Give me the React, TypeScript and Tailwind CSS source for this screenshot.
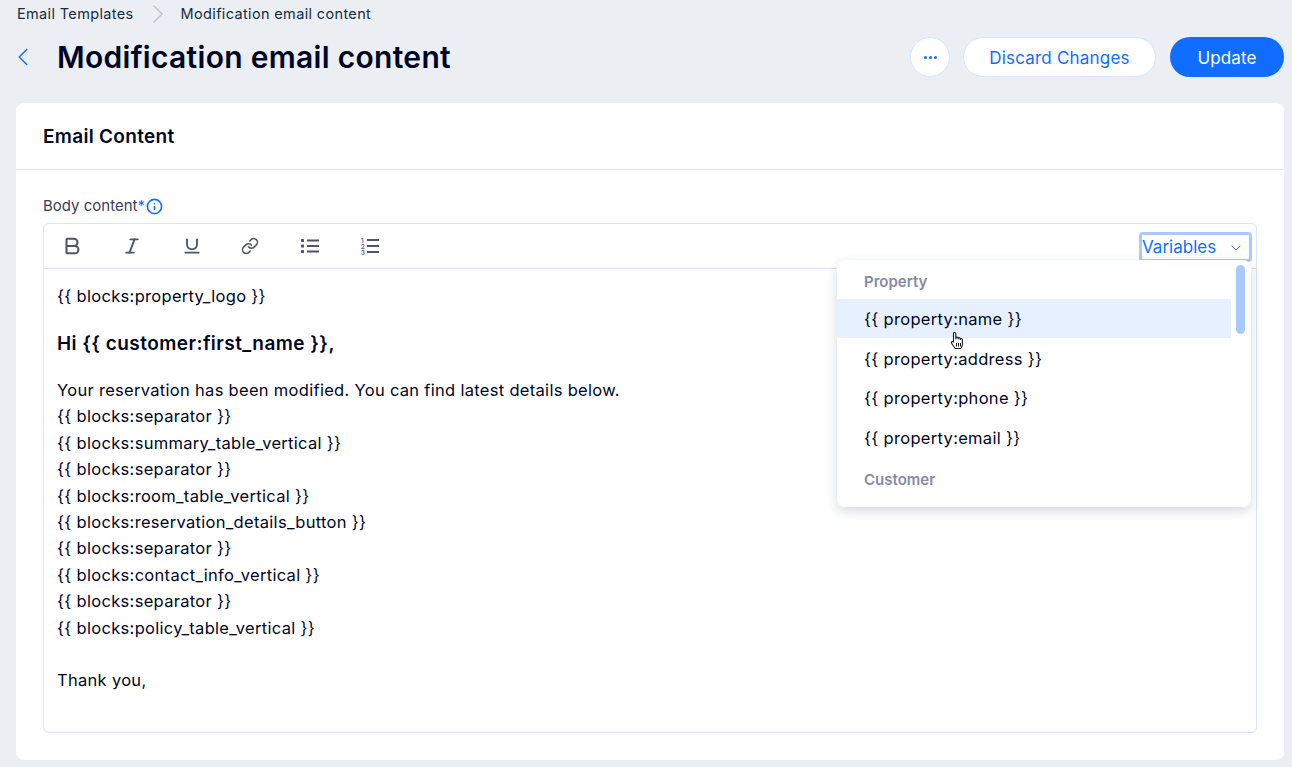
import { ChevronDown, ChevronLeft, ChevronRight, Bold, Italic, Underline, Link, Info } from "lucide-react"

const font = { fontFamily: "Inter, 'Noto Sans', sans-serif" }

const bodyLines = [
  "{{ blocks:separator }}",
  "{{ blocks:summary_table_vertical }}",
  "{{ blocks:separator }}",
  "{{ blocks:room_table_vertical }}",
  "{{ blocks:reservation_details_button }}",
  "{{ blocks:separator }}",
  "{{ blocks:contact_info_vertical }}",
  "{{ blocks:separator }}",
  "{{ blocks:policy_table_vertical }}",
]

function HandCursor() {
  return (
    <svg width="16" height="20" viewBox="0 0 16 20" className="absolute left-[112px] top-[32px]">
      <path
        d="M4.500 11V2.600c0-1.500 2.300-1.500 2.300 0V8l.2-1.200c.2-1.200 2.100-1 2.100.2v1l.2-.7c.3-1 2-.8 2 .4v.8l.2-.4c.4-.8 1.900-.5 1.900.6v4.600c0 2-1 3.200-1.600 4.200H6.200c-.9-1.400-2.200-3-3.600-5.200-.8-1.300.7-2.300 1.600-1.300z"
        fill="#fff"
        stroke="#1a1a1a"
        strokeWidth="1.100"
        strokeLinejoin="round"
      />
      <path d="M7.500 12v3.500M9.500 12v3.500M11.500 12v3.500" stroke="#1a1a1a" strokeWidth="1" />
    </svg>
  )
}

function BulletList() {
  return (
    <svg width="18" height="16" viewBox="0 0 18 16" fill="#4f5468">
      <rect x="0" y="1" width="3" height="3" rx="0.5" />
      <rect x="0" y="6.500" width="3" height="3" rx="0.5" />
      <rect x="0" y="12" width="3" height="3" rx="0.5" />
      <rect x="6" y="1.500" width="12" height="2" />
      <rect x="6" y="7" width="12" height="2" />
      <rect x="6" y="12.500" width="12" height="2" />
    </svg>
  )
}

function NumberList() {
  return (
    <svg width="18" height="18" viewBox="0 0 18 18" fill="#4f5468">
      <text x="0" y="5.500" fontSize="6" fontWeight="600">1</text>
      <text x="0" y="11.500" fontSize="6" fontWeight="600">2</text>
      <text x="0" y="17.500" fontSize="6" fontWeight="600">3</text>
      <rect x="6" y="2" width="12" height="2" />
      <rect x="6" y="8" width="12" height="2" />
      <rect x="6" y="14" width="12" height="2" />
    </svg>
  )
}

export default function App() {
  return (
    <div style={font} className="h-[767px] w-[1292px] overflow-hidden bg-[#ebeef3] text-[#000624]">
      {/* Breadcrumbs */}
      <div className="flex h-[27px] items-center pl-[17px] text-[14.5px] tracking-[0.35px] text-[#162d3d]">
        <span>Email Templates</span>
        <ChevronRight className="ml-[8px] mr-[7px] h-[32px] w-[32px] text-[#b6bccb]" strokeWidth={0.8} />
        <span>Modification email content</span>
      </div>

      {/* Page header */}
      <div className="flex h-[60px] items-center pl-[8px] pr-[8px]">
        <ChevronLeft className="h-[30px] w-[30px] text-[#116dff]" strokeWidth={1.2} />
        <h1 className="ml-[19px] text-[30px] font-semibold leading-none tracking-[0.3px]">Modification email content</h1>
        <div className="ml-auto flex items-center">
          <button className="flex h-[40px] w-[40px] items-center justify-center rounded-full border border-[#d6e6fe] bg-white">
            <span className="flex gap-[2px]">
              <span className="h-[3px] w-[3px] rounded-full bg-[#116dff]" />
              <span className="h-[3px] w-[3px] rounded-full bg-[#116dff]" />
              <span className="h-[3px] w-[3px] rounded-full bg-[#116dff]" />
            </span>
          </button>
          <button className="ml-[13px] h-[40px] w-[193px] rounded-full border border-[#d6e6fe] bg-white pt-[3px] text-[17px] tracking-[0.2px] text-[#116dff]">
            Discard Changes
          </button>
          <button className="ml-[14px] h-[40px] w-[114px] rounded-full bg-[#116dff] pt-[3px] text-[17px] tracking-[0.1px] text-white">
            Update
          </button>
        </div>
      </div>

      {/* Card */}
      <div className="ml-[16px] mr-[8px] mt-[16px] h-[657px] rounded-[8px] bg-white">
        <div className="flex h-[67px] items-center border-b border-[#dfe5eb] pl-[27px] pt-[2px] text-[19px] font-semibold tracking-[0.3px]">
          Email Content
        </div>
        <div className="px-[27px] pt-[26px]">
          <div className="flex h-[20px] items-center text-[15px] text-[#3b4057]">
            Body content<span className="text-[#116dff]">*</span>
            <Info className="ml-[1px] h-[17px] w-[17px] text-[#116dff]" strokeWidth={2.25} />
          </div>
          <div className="relative mt-[7px] h-[510px] rounded-[6px] border border-[#d6e6fe]">
            {/* Toolbar */}
            <div className="flex h-[45px] items-center gap-[20px] border-b border-[#d6e6fe] pl-[8px] text-[#4f5468]">
              <span className="flex w-[40px] justify-center"><Bold className="h-[22px] w-[22px]" strokeWidth={2.25} /></span>
              <span className="flex w-[40px] justify-center"><Italic className="h-[20px] w-[20px]" strokeWidth={2.25} /></span>
              <span className="flex w-[40px] justify-center"><Underline className="h-[20px] w-[20px]" strokeWidth={2.25} /></span>
              <span className="-ml-[2px] flex w-[40px] justify-center"><Link className="h-[18px] w-[18px]" strokeWidth={2} /></span>
              <span className="flex w-[40px] justify-center"><BulletList /></span>
              <span className="flex w-[40px] justify-center"><NumberList /></span>
              <div className="ml-auto mr-[4px] mt-[2px] flex h-[30px] w-[113px] items-center justify-between rounded-[4px] border-[3px] border-[#a8caff] pr-[5px] pt-[1px] text-[17px] text-[#116dff]">
                Variables
                <ChevronDown className="h-[16px] w-[16px]" strokeWidth={1.5} />
              </div>
            </div>

            {/* Editor body */}
            <div className="pl-[13px] pt-[14px] text-[16.5px] leading-[26.4px] tracking-[0.3px]">
              <p>{"{{ blocks:property_logo }}"}</p>
              <p className="mt-[22px] text-[19px] font-semibold tracking-[0.45px]">{"Hi {{ customer:first_name }},"}</p>
              <p className="mt-[19.15px]">Your reservation has been modified. You can find latest details below.</p>
              {bodyLines.map((line, i) => (
                <p key={i}>{line}</p>
              ))}
              <p className="mt-[26px]">Thank you,</p>
            </div>

            {/* Variables dropdown */}
            <div className="absolute left-[793px] top-[36px] h-[247px] w-[414px] rounded-[8px] bg-white shadow-[0_4px_12px_rgba(22,45,61,0.18)]">
              <div className="relative pr-[20px] pt-[4px] text-[16.5px] tracking-[0.3px]">
                <div className="flex h-[35px] items-center pl-[27px] pt-[2px] text-[15px] font-semibold tracking-normal text-[#868aa5]">Property</div>
                <div className="relative flex h-[39px] items-center bg-[#e7f0ff] pl-[27px] pt-[2px]">
                  {"{{ property:name }}"}
                  <HandCursor />
                </div>
                <div className="flex h-[40px] items-center pl-[27px] pt-[2px]">{"{{ property:address }}"}</div>
                <div className="flex h-[39px] items-center pl-[27px] pt-[2px]">{"{{ property:phone }}"}</div>
                <div className="flex h-[40px] items-center pl-[27px] pt-[2px]">{"{{ property:email }}"}</div>
                <div className="flex h-[45px] items-center pl-[27px] pt-[2px] text-[15px] font-semibold tracking-normal text-[#868aa5]">Customer</div>
              </div>
              <div className="absolute right-[6px] top-[5px] h-[69px] w-[9px] rounded-full bg-[#a8caff]" />
            </div>
          </div>
        </div>
      </div>
    </div>
  )
}
